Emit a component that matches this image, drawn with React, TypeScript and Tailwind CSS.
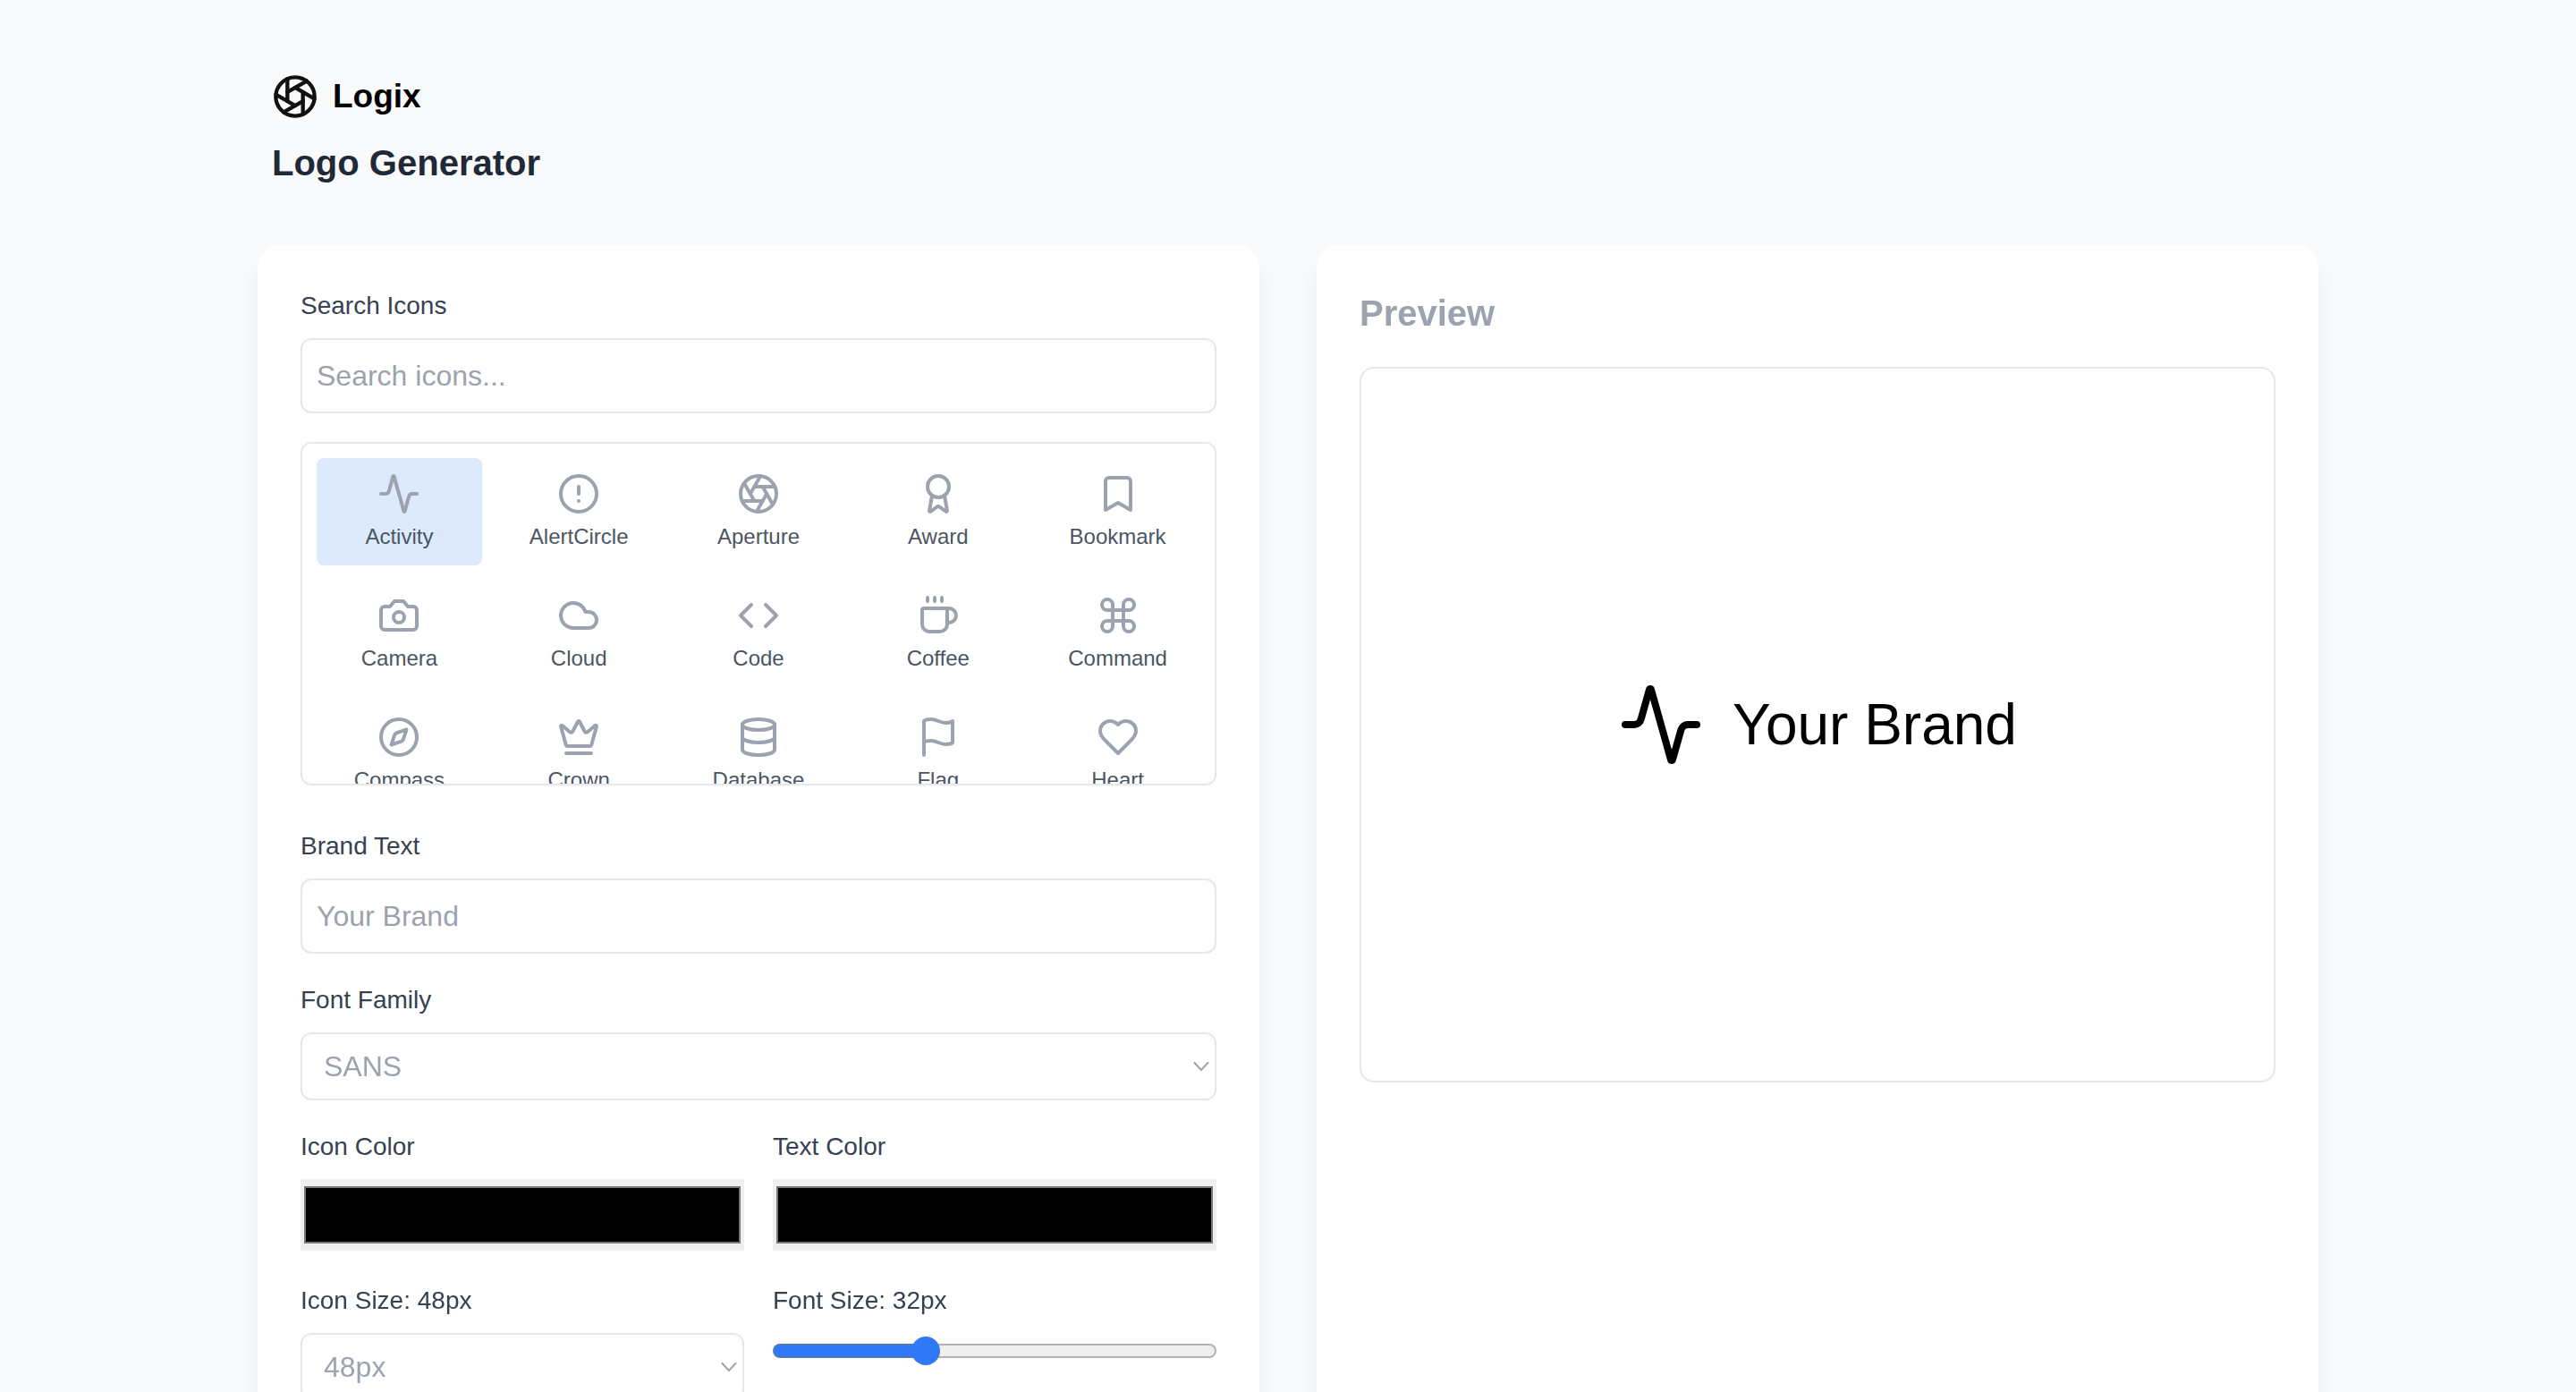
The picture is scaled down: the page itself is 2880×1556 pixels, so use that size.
import { useState, type CSSProperties, type ReactNode } from "react";
import {
  Activity,
  Aperture,
  Award,
  Bookmark,
  CircleAlert,
  Cloud,
  Code,
  Coffee,
  Command,
  Compass,
  Crown,
  Database,
} from "lucide-react";

type IconProps = { className?: string };
type IconType = (props: IconProps) => ReactNode;

function Outline({ className, children }: IconProps & { children: ReactNode }) {
  return (
    <svg
      viewBox="0 0 24 24"
      fill="none"
      stroke="currentColor"
      strokeWidth="2"
      strokeLinecap="round"
      strokeLinejoin="round"
      aria-hidden="true"
      className={className}
    >
      {children}
    </svg>
  );
}

function Camera({ className }: IconProps) {
  return (
    <Outline className={className}>
      <path d="M14.5 4h-5L7 7H4a2 2 0 0 0-2 2v9a2 2 0 0 0 2 2h16a2 2 0 0 0 2-2V9a2 2 0 0 0-2-2h-3l-2.5-3z" />
      <circle cx="12" cy="13" r="3" />
    </Outline>
  );
}

function Flag({ className }: IconProps) {
  return (
    <Outline className={className}>
      <path d="M4 15s1-1 4-1 5 2 8 2 4-1 4-1V3s-1 1-4 1-5-2-8-2-4 1-4 1z" />
      <path d="M4 22v-7" />
    </Outline>
  );
}

function Heart({ className }: IconProps) {
  return (
    <Outline className={className}>
      <path d="M19 14c1.49-1.46 3-3.21 3-5.5A5.5 5.5 0 0 0 16.5 3c-1.76 0-3 .5-4.5 2-1.5-1.5-2.74-2-4.5-2A5.5 5.5 0 0 0 2 8.5c0 2.3 1.5 4.05 3 5.5l7 7Z" />
    </Outline>
  );
}

const icons: { name: string; Icon: IconType }[] = [
  { name: "Activity", Icon: (p) => <Activity {...p} /> },
  { name: "AlertCircle", Icon: (p) => <CircleAlert {...p} /> },
  { name: "Aperture", Icon: (p) => <Aperture {...p} /> },
  { name: "Award", Icon: (p) => <Award {...p} /> },
  { name: "Bookmark", Icon: (p) => <Bookmark {...p} /> },
  { name: "Camera", Icon: Camera },
  { name: "Cloud", Icon: (p) => <Cloud {...p} /> },
  { name: "Code", Icon: (p) => <Code {...p} /> },
  { name: "Coffee", Icon: (p) => <Coffee {...p} /> },
  { name: "Command", Icon: (p) => <Command {...p} /> },
  { name: "Compass", Icon: (p) => <Compass {...p} /> },
  { name: "Crown", Icon: (p) => <Crown {...p} /> },
  { name: "Database", Icon: (p) => <Database {...p} /> },
  { name: "Flag", Icon: Flag },
  { name: "Heart", Icon: Heart },
];

const card =
  "rounded-3xl bg-white p-12 shadow-[0_20px_30px_-6px_rgb(0_0_0/0.1),0_8px_12px_-8px_rgb(0_0_0/0.1)]";
const box = "rounded-xl border-2 border-[#e5e7eb] bg-white";

function Field({ id, label, children }: { id: string; label: string; children: ReactNode }) {
  return (
    <div className="flex min-w-0 flex-col gap-4">
      <label htmlFor={id} className="text-[28px] leading-10 text-[#374151]">
        {label}
      </label>
      {children}
    </div>
  );
}

function TextInput(props: {
  id: string;
  placeholder: string;
  value: string;
  onChange: (value: string) => void;
}) {
  return (
    <input
      id={props.id}
      type="text"
      placeholder={props.placeholder}
      value={props.value}
      onChange={(e) => props.onChange(e.target.value)}
      className={`${box} h-21 w-full px-4 text-[32px] leading-12 text-[#9ca3af] placeholder:text-[#9ca3af]`}
    />
  );
}

function Select(props: {
  id: string;
  options: string[];
  value: string;
  onChange: (value: string) => void;
}) {
  return (
    <div className="relative">
      <select
        id={props.id}
        value={props.value}
        onChange={(e) => props.onChange(e.target.value)}
        className={`${box} block h-19 w-full appearance-none px-6 text-[32px] text-[#9ca3af]`}
      >
        {props.options.map((option) => (
          <option key={option}>{option}</option>
        ))}
      </select>
      <svg
        viewBox="0 0 18 12"
        fill="none"
        stroke="#9ca3af"
        strokeWidth="2"
        strokeLinecap="round"
        aria-hidden="true"
        className="pointer-events-none absolute inset-y-0 right-2 my-auto h-3 w-4.5"
      >
        <path d="M1.5 2 9 10l7.5-8" />
      </svg>
    </div>
  );
}

function ColorInput(props: { id: string; value: string; onChange: (value: string) => void }) {
  return (
    <input
      id={props.id}
      type="color"
      value={props.value}
      onChange={(e) => props.onChange(e.target.value)}
      className="h-20 w-full appearance-none bg-[#efefef] p-0 [&::-webkit-color-swatch]:border-2 [&::-webkit-color-swatch]:border-[#777777] [&::-webkit-color-swatch-wrapper]:px-1 [&::-webkit-color-swatch-wrapper]:py-2"
    />
  );
}

export default function App() {
  const [query, setQuery] = useState("");
  const [selected, setSelected] = useState("Activity");
  const [brand, setBrand] = useState("");
  const [font, setFont] = useState("SANS");
  const [iconColor, setIconColor] = useState("#000000");
  const [textColor, setTextColor] = useState("#000000");
  const [iconSize, setIconSize] = useState("48px");
  const [fontSize, setFontSize] = useState(32);

  const visible = icons.filter(({ name }) => name.toLowerCase().includes(query.toLowerCase()));
  const Preview = icons.find(({ name }) => name === selected)!.Icon;
  const fill = { "--fill": `${((fontSize - 16) / 48) * 100}%` } as CSSProperties;

  return (
    <div className="h-screen overflow-y-auto bg-[#f9fafb] font-['Liberation_Sans',Arial,sans-serif] [scrollbar-width:none]">
      <div className="mx-auto max-w-[2304px] pt-20 pb-16">
        <header className="mb-16 flex flex-col gap-5 px-4 pt-0.5">
          <div className="flex items-center gap-4">
            <Aperture className="size-13 rotate-90 text-[#111111]" />
            <span className="text-[37px] leading-13 font-bold text-black">Logix</span>
          </div>
          <h1 className="text-[40px] leading-14 font-bold text-[#1f2937]">Logo Generator</h1>
        </header>

        <main className="grid grid-cols-2 gap-16">
          <section className={`${card} flex flex-col gap-8`}>
            <Field id="search" label="Search Icons">
              <TextInput
                id="search"
                placeholder="Search icons..."
                value={query}
                onChange={setQuery}
              />
            </Field>

            <div
              className={`${box} mb-4 grid h-96 grid-cols-5 content-start gap-4 overflow-y-auto p-4 [scrollbar-width:none]`}
            >
              {visible.map(({ name, Icon }) => (
                <button
                  key={name}
                  type="button"
                  aria-pressed={name === selected}
                  onClick={() => setSelected(name)}
                  className={`flex flex-col items-center gap-2 rounded-lg p-4 ${
                    name === selected ? "bg-[#dde9fc]" : ""
                  }`}
                >
                  <Icon className="size-12 text-[#9ca3af]" />
                  <span className="text-2xl leading-8 text-[#4b5563]">{name}</span>
                </button>
              ))}
            </div>

            <Field id="brand" label="Brand Text">
              <TextInput id="brand" placeholder="Your Brand" value={brand} onChange={setBrand} />
            </Field>

            <Field id="font" label="Font Family">
              <Select
                id="font"
                options={["SANS", "SERIF", "MONO"]}
                value={font}
                onChange={setFont}
              />
            </Field>

            <div className="grid grid-cols-2 gap-x-8 gap-y-9">
              <Field id="icon-color" label="Icon Color">
                <ColorInput id="icon-color" value={iconColor} onChange={setIconColor} />
              </Field>
              <Field id="text-color" label="Text Color">
                <ColorInput id="text-color" value={textColor} onChange={setTextColor} />
              </Field>
              <Field id="icon-size" label={`Icon Size: ${iconSize}`}>
                <Select
                  id="icon-size"
                  options={["24px", "32px", "48px", "64px"]}
                  value={iconSize}
                  onChange={setIconSize}
                />
              </Field>
              <Field id="font-size" label={`Font Size: ${fontSize}px`}>
                <input
                  id="font-size"
                  type="range"
                  min={16}
                  max={64}
                  value={fontSize}
                  onChange={(e) => setFontSize(Number(e.target.value))}
                  style={fill}
                  className="h-10 w-full appearance-none bg-transparent [&::-webkit-slider-runnable-track]:h-4 [&::-webkit-slider-runnable-track]:rounded-full [&::-webkit-slider-runnable-track]:border-2 [&::-webkit-slider-runnable-track]:border-transparent [&::-webkit-slider-runnable-track]:[background:linear-gradient(to_right,#2f78f6_var(--fill),#efefef_var(--fill))_padding-box,linear-gradient(to_right,#4f79b8_var(--fill),#b2b2b2_var(--fill))_border-box] [&::-webkit-slider-thumb]:-mt-2.5 [&::-webkit-slider-thumb]:size-8 [&::-webkit-slider-thumb]:appearance-none [&::-webkit-slider-thumb]:rounded-full [&::-webkit-slider-thumb]:bg-[#2f78f6]"
                />
              </Field>
            </div>
          </section>

          <section className={`${card} flex flex-col gap-8`}>
            <h2 className="text-[40px] leading-14 font-bold text-[#9ca3af]">Preview</h2>
            <div className="flex h-200 items-center justify-center gap-8 rounded-2xl border-2 border-[#e5e7eb]">
              <span style={{ color: iconColor }}>
                <Preview className="size-24" />
              </span>
              <span
                className="leading-none"
                style={{ color: textColor, fontSize: `${fontSize * 2}px` }}
              >
                {brand || "Your Brand"}
              </span>
            </div>
          </section>
        </main>
      </div>
    </div>
  );
}
